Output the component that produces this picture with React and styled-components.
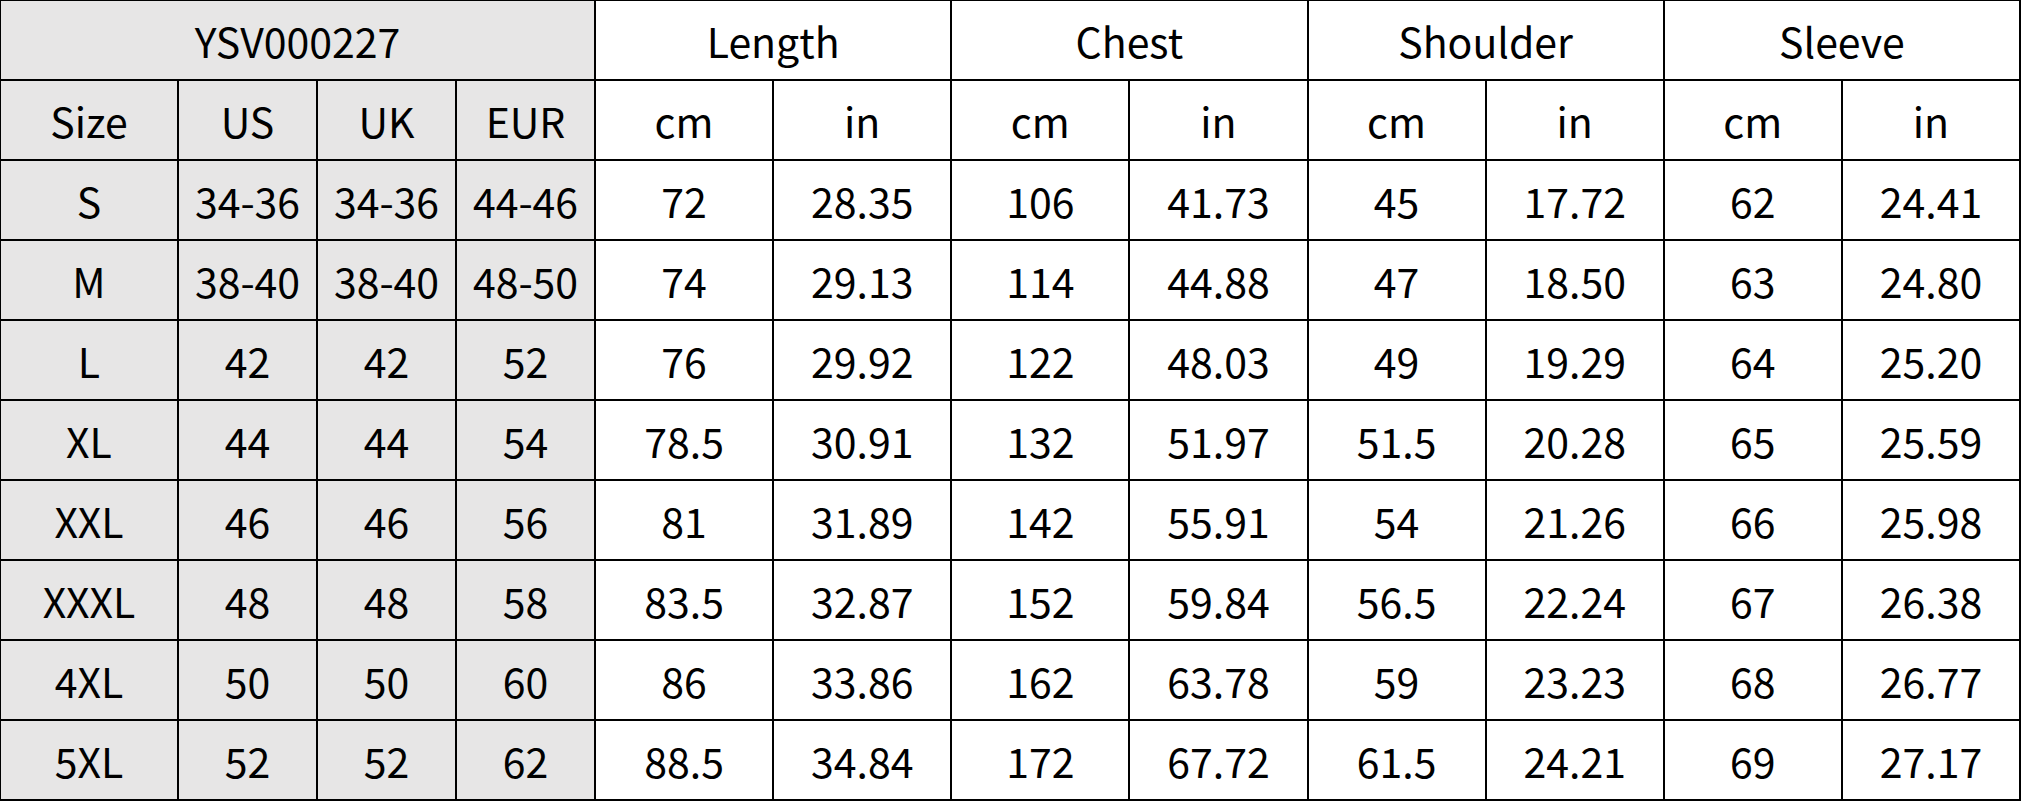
import styled, { createGlobalStyle } from "styled-components";

const GlobalStyle = createGlobalStyle`
  html, body {
    margin: 0;
    padding: 0;
    background: #fff;
  }
`;

const groups = ["Length", "Chest", "Shoulder", "Sleeve"];

const rows = [
  ["S", "34-36", "34-36", "44-46", "72", "28.35", "106", "41.73", "45", "17.72", "62", "24.41"],
  ["M", "38-40", "38-40", "48-50", "74", "29.13", "114", "44.88", "47", "18.50", "63", "24.80"],
  ["L", "42", "42", "52", "76", "29.92", "122", "48.03", "49", "19.29", "64", "25.20"],
  ["XL", "44", "44", "54", "78.5", "30.91", "132", "51.97", "51.5", "20.28", "65", "25.59"],
  ["XXL", "46", "46", "56", "81", "31.89", "142", "55.91", "54", "21.26", "66", "25.98"],
  ["XXXL", "48", "48", "58", "83.5", "32.87", "152", "59.84", "56.5", "22.24", "67", "26.38"],
  ["4XL", "50", "50", "60", "86", "33.86", "162", "63.78", "59", "23.23", "68", "26.77"],
  ["5XL", "52", "52", "62", "88.5", "34.84", "172", "67.72", "61.5", "24.21", "69", "27.17"],
];

function App() {
  return (
    <>
      <GlobalStyle />
      <Grid>
        <Cell $shade $span={4}>YSV000227</Cell>
        {groups.map((g) => (
          <Cell key={g} $span={2}>
            {g}
          </Cell>
        ))}
        {["Size", "US", "UK", "EUR"].map((h) => (
          <Cell key={h} $shade>
            {h}
          </Cell>
        ))}
        {groups.map((g) => [
          <Cell key={g + "cm"}>cm</Cell>,
          <Cell key={g + "in"}>in</Cell>,
        ])}
        {rows.map((r) =>
          r.map((v, i) => (
            <Cell key={r[0] + i} $shade={i < 4}>
              {v}
            </Cell>
          ))
        )}
      </Grid>
    </>
  );
}

export default App;

const Grid = styled.div`
  width: 2021px;
  box-sizing: border-box;
  display: grid;
  grid-template-columns: 176px 137px 137px 137px repeat(8, 1fr);
  grid-auto-rows: 78px;
  gap: 2px;
  padding: 1px 2px 2px 1px;
  background: #000;
  font-family: "Noto Sans CJK SC", "Open Sans", sans-serif;
  font-size: 41px;
  color: #000;
`;

const Cell = styled.div`
  grid-column: span ${(p) => p.$span || 1};
  display: flex;
  align-items: center;
  justify-content: center;
  background: ${(p) => (p.$shade ? "#e7e6e6" : "#fff")};
  white-space: nowrap;
  line-height: 1;
`;
